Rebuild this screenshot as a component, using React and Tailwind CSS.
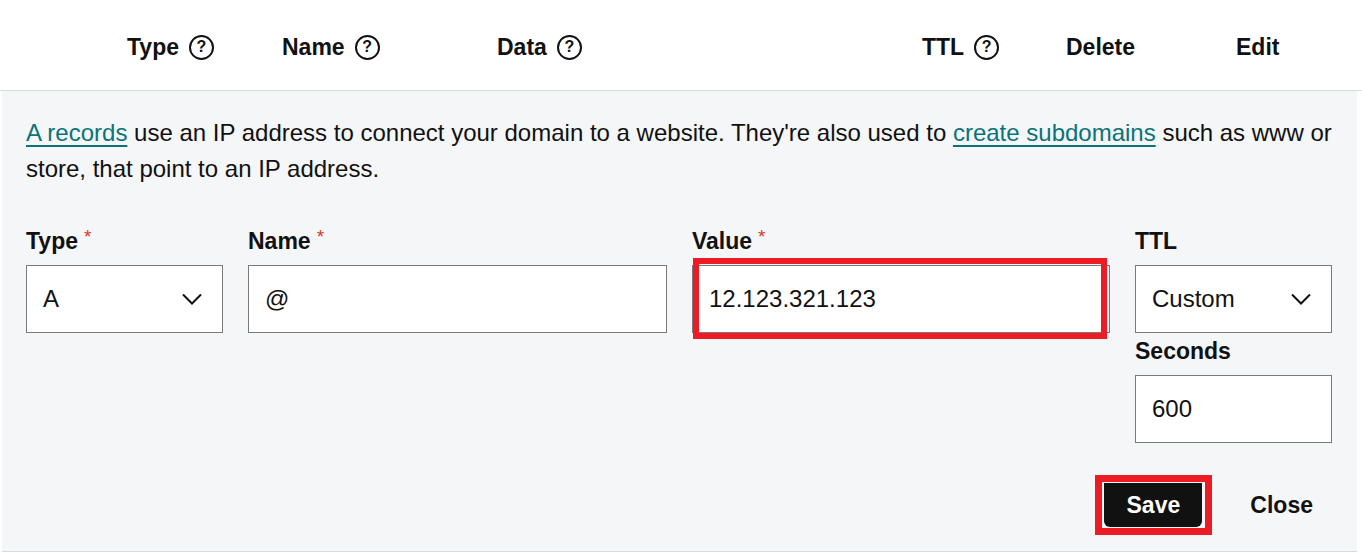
import React from "react";

const font = { fontFamily: '"Liberation Sans", Arial, sans-serif' };

const HelpIcon = () => (
  <span className="ml-[10px] inline-flex h-[25px] w-[25px] items-center justify-center rounded-full border-2 border-[#111] text-[16px] font-bold leading-none text-[#111]">
    ?
  </span>
);

const Chevron = () => (
  <svg width="20" height="12" viewBox="0 0 20 12" fill="none">
    <path d="M1 1.5 10 10.5 19 1.5" stroke="#111" strokeWidth="2" />
  </svg>
);

const Required = () => (
  <span className="relative top-[-4px] ml-[6px] text-[19px] font-normal text-[#d9381e]">*</span>
);

const Label = ({ children, req }) => (
  <div className="flex h-[28px] items-center text-[23px] font-bold text-[#111]">
    {children}
    {req && <Required />}
  </div>
);

const Box = ({ children, className = "" }) => (
  <div
    className={`flex h-[68px] items-center border border-[#7a7a7a] bg-white px-4 text-[24px] text-[#111] ${className}`}
  >
    {children}
  </div>
);

const App = () => {
  return (
    <div className="h-[552px] w-[1362px] overflow-hidden bg-white" style={font}>
      {/* table header */}
      <div className="flex h-[91px] items-center border-b border-[#d5dbe1] pl-[127px] pt-[4px] text-[23px] font-bold text-[#111]">
        <div className="flex w-[155px] items-center">
          Type <HelpIcon />
        </div>
        <div className="flex w-[215px] items-center">
          Name <HelpIcon />
        </div>
        <div className="flex w-[425px] items-center">
          Data <HelpIcon />
        </div>
        <div className="flex w-[144px] items-center">
          TTL <HelpIcon />
        </div>
        <div className="w-[170px]">Delete</div>
        <div>Edit</div>
      </div>

      {/* edit panel */}
      <div className="ml-[2px] w-[1355px] border-b border-[#d5dbe1] bg-[#f5f6f8] px-[24px] pt-[24px] pb-[24px]">
        <p className="text-[24px] leading-[36px] text-[#111]">
          <a href="#" className="text-[#0b7378] underline underline-offset-[4px]">
            A records
          </a>{" "}
          use an IP address to connect your domain to a website. They're also used to{" "}
          <a href="#" className="text-[#0b7378] underline underline-offset-[4px]">
            create subdomains
          </a>{" "}
          such as www or store, that point to an IP address.
        </p>

        <div className="mt-[40px] flex gap-[25px]">
          <div className="flex w-[197px] flex-col gap-[10px]">
            <Label req>Type</Label>
            <Box className="justify-between pr-[20px]">
              <span>A</span>
              <Chevron />
            </Box>
          </div>
          <div className="flex w-[419px] flex-col gap-[10px]">
            <Label req>Name</Label>
            <Box>@</Box>
          </div>
          <div className="flex w-[418px] flex-col gap-[10px]">
            <Label req>Value</Label>
            <div className="relative">
              <Box>12.123.321.123</Box>
              <div className="pointer-events-none absolute left-[1px] top-[-7px] h-[81px] w-[414px] border-[6px] border-[#ed1c24]" />
            </div>
          </div>
          <div className="flex w-[197px] flex-col gap-[10px]">
            <Label>TTL</Label>
            <Box className="justify-between pr-[20px]">
              <span>Custom</span>
              <Chevron />
            </Box>
            <div className="mt-[-6px] flex flex-col gap-[10px]">
              <Label>Seconds</Label>
              <Box>600</Box>
            </div>
          </div>
        </div>

        <div className="mt-[40px] flex items-center justify-end">
          <div className="relative">
            <button className="h-[44px] w-[98px] rounded-b-[6px] bg-[#111] text-[23px] font-bold text-white">
              Save
            </button>
            <div className="pointer-events-none absolute left-[-9px] top-[-8px] h-[60px] w-[117px] border-[7px] border-[#ed1c24]" />
          </div>
          <button className="ml-[25px] pl-[23px] pr-[20px] text-[23px] font-bold text-[#111]">Close</button>
        </div>
      </div>
    </div>
  );
};

export default App;
